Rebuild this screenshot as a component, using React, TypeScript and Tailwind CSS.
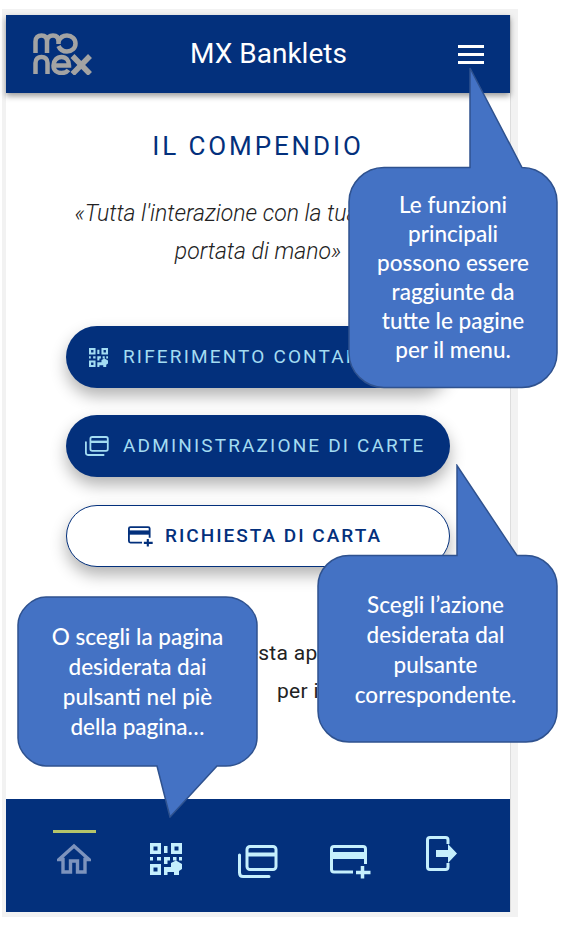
import React from 'react';

const MonexLogo = () => (
  <svg width="59" height="42" viewBox="0 0 59 42" fill="none" stroke="#a3a3a3" strokeWidth="4.500">
    <path d="M2.500 20V8.500C2.500 4.500 5 2.500 8.500 2.500S14 4.500 14 8.500V20M14 8.500C14 4.500 16.500 2.500 20 2.500S25.500 4.500 25.500 8.500V11" />
    <path d="M25.500 8.500C27 4.500 30 2.500 34 2.500C39 2.500 42.500 6 42.500 10.500S39 18.500 34 18.500C30 18.500 27 16.500 25.500 13" />
    <path d="M2.500 41V30C2.500 26 5 24 8.500 24S14.500 26 14.500 30V41" />
    <path d="M21 32.500H36C36 27 33 24 28.500 24S20.500 27.500 20.500 32.500S24 40 28.500 40C31.500 40 34 39 35.500 37" />
    <path d="M39.500 23L57 41M57 23L39.500 41" strokeWidth="5.500" />
  </svg>
);

const QrIcon = ({ className }: { className: string }) => (
  <svg className={className} viewBox="0 0 32 32" fill="currentColor">
    <path fillRule="evenodd" d="M0 0H11V11H0ZM3.500 3.500V7.500H7.500V3.500ZM21 0H32V11H21ZM24.500 3.500V7.500H28.500V3.500ZM0 21H11V32H0ZM3.500 24.500V28.500H7.500V24.500Z" />
    <path d="M14 3H17.500V10H14ZM0 14H3V17.500H0ZM7 14H11V17.500H7ZM14 14H20V17.500H17.500V21H14ZM23 14H26.500V17.500H23ZM29 14H32V17.500H29ZM14 24H21V20L26 17.500L32 21V26L29 28V32H24V29H17.500V32H14Z" />
  </svg>
);

const CardsIcon = ({ className }: { className: string }) => (
  <svg className={className} viewBox="0 0 40 33" fill="none" stroke="currentColor" strokeWidth="3">
    <rect x="9" y="1.500" width="29" height="23" rx="3" />
    <path d="M9 9.500H38" strokeWidth="4" />
    <path d="M1.500 10V27.500C1.500 30 3 31.500 5 31.500H31" strokeLinecap="round" />
  </svg>
);

const AddCardIcon = ({ className }: { className: string }) => (
  <svg className={className} viewBox="0 0 41 34" fill="none" stroke="currentColor" strokeWidth="3">
    <path d="M23 27H4C2.500 27 1.500 26 1.500 24.500V4C1.500 2.500 2.500 1.500 4 1.500H33C34.500 1.500 35.500 2.500 35.500 4V19" />
    <path d="M1.500 10.500H35.500" strokeWidth="7" />
    <path d="M32.500 21V33.500M26 27.500H40.500" strokeWidth="3.500" />
  </svg>
);

const LogoutIcon = ({ className }: { className: string }) => (
  <svg className={className} viewBox="0 0 32 36" fill="none" stroke="currentColor" strokeWidth="3">
    <path d="M22 8V4C22 2.500 21 1.500 19.500 1.500H4C2.500 1.500 1.500 2.500 1.500 4V31C1.500 32.500 2.500 33.500 4 33.500H19.500C21 33.500 22 32.500 22 31V27" />
    <path d="M10 14H22V8L31 17.500L22 27V21H10Z" fill="currentColor" stroke="none" />
  </svg>
);

const HomeIcon = ({ className }: { className: string }) => (
  <svg className={className} viewBox="0 0 34 30" fill="none" stroke="currentColor" strokeWidth="3.400">
    <path d="M2 16L17 2.500L32 16H28V28.500H20.500V17.500H13.500V28.500H6V16Z" />
  </svg>
);

const Callout = ({ className, bodyClass, width, height, d, lines }: {
  className: string;
  bodyClass: string;
  width: number;
  height: number;
  d: string;
  lines: string[];
}) => (
  <div className={`absolute ${className}`}>
    <svg width={width} height={height} viewBox={`0 0 ${width} ${height}`} className="block">
      <path d={d} fill="#4472c4" stroke="#2f528f" strokeWidth="1.500" />
    </svg>
    <div className={`absolute flex flex-col items-center justify-center text-center text-white font-['Lato',sans-serif] font-medium ${bodyClass}`}>
      {lines.map((line) => (
        <div key={line}>{line}</div>
      ))}
    </div>
  </div>
);

export default function App() {
  return (
    <div className="relative w-[566px] h-[926px] bg-white overflow-hidden font-['Roboto',sans-serif]">
      <div className="ml-[2px] mt-[9px] w-[516px] h-[908px] bg-[#f2f2f2] pl-[4px] pt-[6px] pr-[7px] pb-[5px]">
        <div className="h-full flex flex-col bg-white border-r border-[#dddddd]">
          <header className="h-[78px] shrink-0 bg-[#03307c] shadow-[0_3px_6px_rgba(0,0,0,0.4)] flex items-center justify-between pl-[27px] pr-[26px] relative">
            <MonexLogo />
            <span className="text-white text-[28px] mr-[13px]">MX Banklets</span>
            <div className="w-[26px] flex flex-col gap-[5px]">
              <div className="h-[3px] bg-white" />
              <div className="h-[3px] bg-white" />
              <div className="h-[3px] bg-white" />
            </div>
          </header>

          <main className="flex-1 flex flex-col items-center">
            <h1 className="mt-[36px] text-[26px] leading-[34px] tracking-[2.900px] text-[#03307c]">IL COMPENDIO</h1>
            <p className="mt-[32px] w-[440px] text-center text-[23px] leading-[38px] font-light italic text-[#222222]">
              «Tutta l'interazione con la tua banca a
              <br />
              portata di mano»
            </p>

            <div className="mt-[55px] flex flex-col gap-[27px]">
              <button className="w-[384px] h-[62px] rounded-full bg-[#03307c] text-[#a3dcf2] text-[19px] font-normal tracking-[2.150px] flex items-center pl-[23px] gap-[15px] shadow-[0_8px_16px_rgba(0,0,0,0.3)]">
                <QrIcon className="w-[19px] h-[19px]" />
                RIFERIMENTO CONTANTE
              </button>
              <button className="w-[384px] h-[62px] rounded-full bg-[#03307c] text-[#a3dcf2] text-[19px] font-normal tracking-[2.150px] flex items-center pl-[19px] gap-[14px] shadow-[0_8px_16px_rgba(0,0,0,0.3)]">
                <CardsIcon className="w-[24px] h-[20px]" />
                ADMINISTRAZIONE DI CARTE
              </button>
              <button className="mt-[1px] w-[384px] h-[62px] rounded-full bg-white border border-[#03307c] text-[#03307c] text-[19px] font-medium tracking-[2px] flex items-center justify-center gap-[12px] pr-[6px] shadow-[0_8px_16px_rgba(0,0,0,0.3)]">
                <AddCardIcon className="w-[25px] h-[21px]" />
                RICHIESTA DI CARTA
              </button>
            </div>

            <div className="mt-[67px] w-[440px] text-[21px] leading-[38px] tracking-[0.300px] text-[#222222]">
              <p className="text-center">Benvenuto in questa app di Monex</p>
              <p className="pl-[239px]">per i tuoi conti</p>
            </div>
          </main>

          <footer className="h-[113px] shrink-0 bg-[#03307c] grid grid-cols-5 px-[22px] text-[#c5effd]">
            <div className="flex flex-col items-center">
              <div className="mt-[31px] w-[43px] h-[3px] bg-[#b5c46a]" />
              <HomeIcon className="mt-[10px] w-[34px] h-[31px] text-[#7d93bd]" />
            </div>
            <div className="flex justify-center">
              <QrIcon className="mt-[44px] w-[32px] h-[32px]" />
            </div>
            <div className="flex justify-center">
              <CardsIcon className="mt-[46px] w-[40px] h-[33px]" />
            </div>
            <div className="flex justify-center">
              <AddCardIcon className="mt-[46px] w-[41px] h-[34px]" />
            </div>
            <div className="flex justify-center">
              <LogoutIcon className="mt-[37px] w-[32px] h-[36px]" />
            </div>
          </footer>
        </div>
      </div>

      <Callout
        className="left-[348px] top-[66px]"
        bodyClass="left-[1px] top-[124px] w-[208px] text-[22.500px] leading-[29px]"
        width={210}
        height={323}
        d="M122 2V101.500H36C17 101.500 1 117 1 136V287C1 306 17 321.500 36 321.500H174C193 321.500 209 306 209 287V136C209 117 193 101.500 174 101.500Z"
        lines={['Le funzioni', 'principali', 'possono essere', 'raggiunte da', 'tutte le pagine', 'per il menu.']}
      />
      <Callout
        className="left-[317px] top-[464px]"
        bodyClass="left-[-1px] top-[126px] w-[239px] text-[22.500px] leading-[30px]"
        width={241}
        height={279}
        d="M140 1.500V91.500H32C15 91.500 1 105 1 122V247C1 264 15 278 32 278H209C226 278 240 264 240 247V122C240 105 226 91.500 209 91.500H200Z"
        lines={['Scegli l’azione', 'desiderata dal', 'pulsante', 'correspondente.']}
      />
      <Callout
        className="left-[17px] top-[596px]"
        bodyClass="left-[1px] top-[26px] w-[239px] text-[22.500px] leading-[30px]"
        width={241}
        height={222}
        d="M29 1H209C226 1 240 15 240 29V142C240 156 226 170 209 170H200L153 221L140 170H29C15 170 1 156 1 142V29C1 15 15 1 29 1Z"
        lines={['O scegli la pagina', 'desiderata dai', 'pulsanti nel piè', 'della pagina…']}
      />
    </div>
  );
}
